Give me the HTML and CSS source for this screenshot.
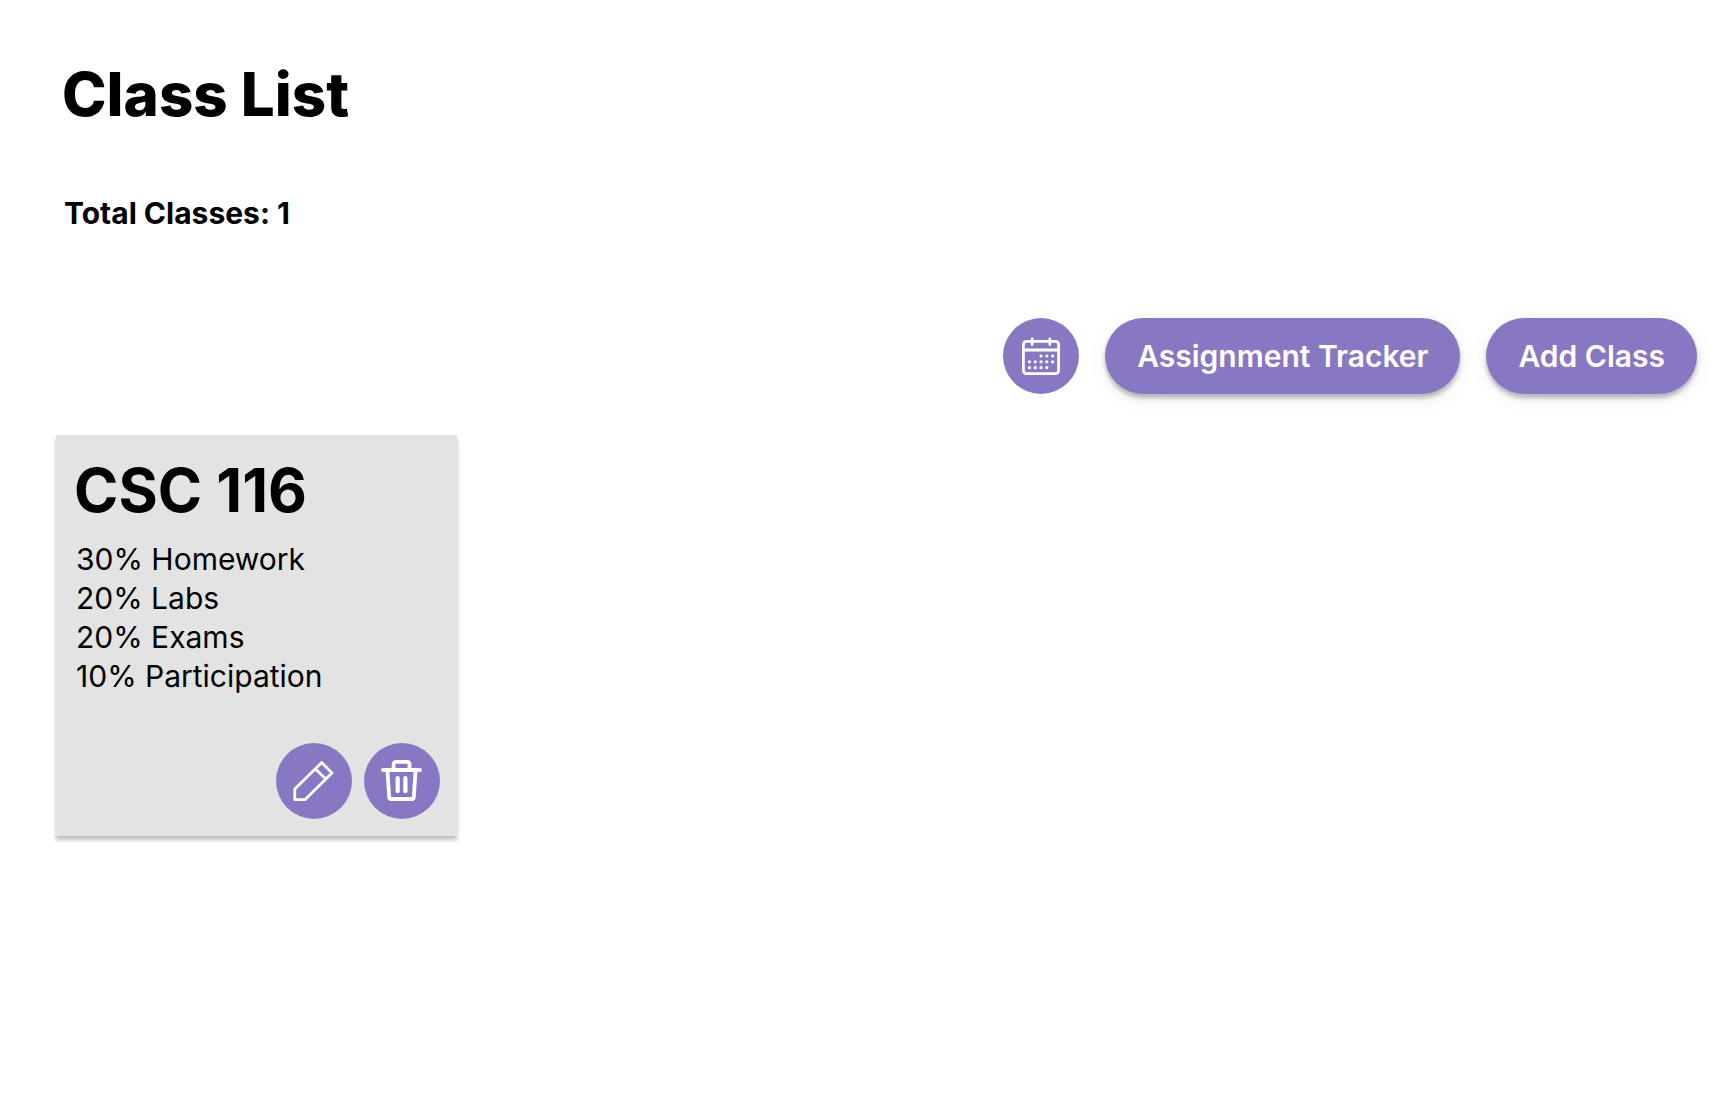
FILE: index.html
```html
<!DOCTYPE html>
<html lang="en">
<head>
<meta charset="utf-8">
<title>Class List</title>
<link rel="stylesheet" href="styles.css">
</head>
<body>
<main class="page">
  <h1 class="title">Class List</h1>
  <p class="total">Total Classes: 1</p>
  <div class="toolbar">
    <button class="icon-button" type="button" aria-label="Calendar">
      <svg width="40" height="40" viewBox="0 0 40 40" fill="none" stroke="currentColor" stroke-width="2.8" stroke-linecap="round" stroke-linejoin="round"><rect x="2.400" y="5.400" width="35.200" height="32.200" rx="3"/><path d="M2.400 14H37.600M11.200 3V8.500M28.800 3V8.500"/><path stroke-width="3.200" d="M20 20h.01M25.800 20h.01M31.600 20h.01M8.400 25.800h.01M14.200 25.800h.01M20 25.800h.01M25.800 25.800h.01M31.600 25.800h.01M8.400 31.700h.01M14.200 31.700h.01M20 31.700h.01M25.800 31.700h.01"/></svg>
    </button>
    <button class="pill" type="button">Assignment Tracker</button>
    <button class="pill" type="button">Add Class</button>
  </div>
  <article class="card">
    <h2 class="course">CSC 116</h2>
    <ul class="weights">
      <li>30% Homework</li>
      <li>20% Labs</li>
      <li>20% Exams</li>
      <li>10% Participation</li>
    </ul>
    <div class="actions">
      <button class="icon-button" type="button" aria-label="Edit class">
        <svg width="42" height="42" viewBox="0 0 42 42" fill="none" stroke="currentColor" stroke-width="2.800" stroke-linejoin="round"><path d="M1.800 39.600V29L28.700 2.600L39 13L12.200 39.600ZM22.500 9L33 19.200"/></svg>
      </button>
      <button class="icon-button" type="button" aria-label="Delete class">
        <svg width="42" height="42" viewBox="0 0 42 42" fill="none" stroke="currentColor" stroke-width="3.800" stroke-linecap="round" stroke-linejoin="round"><path d="M2 10H39M12.600 10V4.400Q12.600 1.900 15.100 1.900H26Q28.500 1.900 28.500 4.400V10M6.400 10L8.200 37.200Q8.400 39 10 39H31Q32.600 39 32.800 37.200L34.600 10"/><path stroke-width="4.200" d="M16.700 18.200V31.200M24.400 18.200V31.200"/></svg>
      </button>
    </div>
  </article>
</main>
</body>
</html>
```
FILE: styles.css
```css
* {
  box-sizing: border-box;
}

body {
  margin: 0;
  background: #fff;
  color: #000;
  font-family: Inter, sans-serif;
}

.page {
  padding: 56px 31px 56px 56px;
}

.title {
  margin: 0 0 56px 6px;
  font-size: 60px;
  line-height: 76px;
  font-weight: 800;
}

.total {
  margin: 0 0 80px 8px;
  font-size: 30px;
  line-height: 50px;
  font-weight: 700;
}

.toolbar {
  display: flex;
  justify-content: flex-end;
  gap: 26px;
  margin-bottom: 41px;
}

.icon-button,
.pill {
  display: flex;
  align-items: center;
  justify-content: center;
  height: 76px;
  padding: 0;
  border: 0;
  border-radius: 38px;
  background: #8878c3;
  color: #fff;
  font: inherit;
}

.icon-button {
  width: 76px;
}

.pill {
  padding: 0 32px;
  font-size: 30px;
  font-weight: 600;
  box-shadow: 0 4px 4px rgba(0, 0, 0, 0.25), 0 4px 20px rgba(0, 0, 60, 0.08);
}

.card {
  display: flex;
  flex-direction: column;
  width: 401px;
  min-height: 401px;
  padding: 17px 17px 17px 20px;
  background: #e3e3e3;
  box-shadow: 0 4px 4px rgba(0, 0, 0, 0.25);
}

.course {
  margin: 0 0 12px -2px;
  font-size: 60px;
  line-height: 76px;
  font-weight: 700;
  font-kerning: none;
}

.weights {
  margin: 0;
  padding: 0;
  list-style: none;
  font-size: 30px;
  line-height: 39px;
}

.actions {
  display: flex;
  justify-content: flex-end;
  gap: 12px;
  margin-top: auto;
}
```
